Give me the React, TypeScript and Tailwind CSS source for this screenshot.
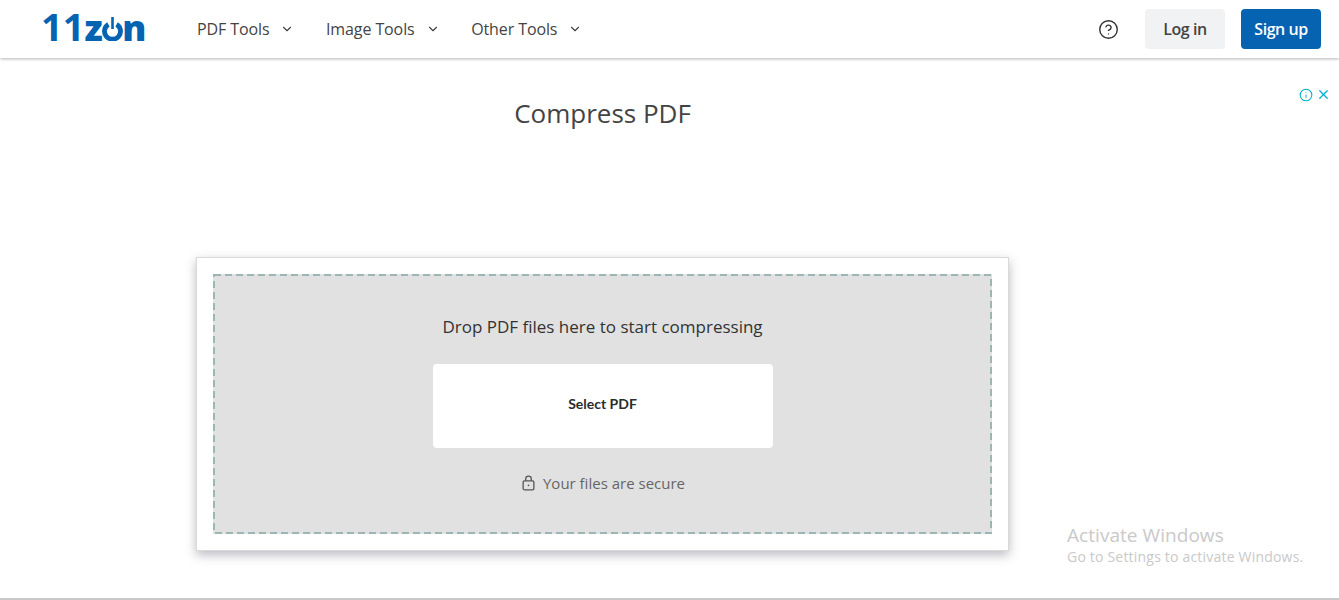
import React, { FC } from "react"
import { ChevronDown, CircleHelp, Info, X } from "lucide-react"

const NAV_ITEMS = ["PDF Tools", "Image Tools", "Other Tools"]

const Logo: FC = () => {
  return (
    <div className="mb-[4px] flex w-[104px] shrink-0 items-baseline text-[#0563b2] font-['Open_Sans',sans-serif] font-bold leading-[30px]">
      <span className="shrink-0 text-[38px]">11</span>
      <span className="shrink-0 text-[36px] font-extrabold tracking-[-0.5px]">z</span>
      <svg viewBox="0 0 21 24" className="h-[24px] w-[21px] shrink-0" fill="none">
        <path d="M6.4 7.4a8 8 0 1 0 8.2 0" stroke="#0563b2" strokeWidth="4.8" />
        <path d="M10.5 0v12" stroke="#0563b2" strokeWidth="2.6" />
      </svg>
      <span className="shrink-0 ml-[-1px] text-[36px] font-extrabold tracking-[-0.5px]">n</span>
    </div>
  )
}

const Header: FC = () => {
  return (
    <header className="relative flex h-[58px] items-center justify-between bg-white pl-[41px] pr-[18px] shadow-[0_1px_3px_rgba(0,0,0,0.3)]">
      <div className="flex items-center">
        <Logo />
        <nav className="ml-[52px] flex items-center gap-[31.5px]">
          {NAV_ITEMS.map((item) => (
            <button key={item} className="flex items-center gap-[11px] text-[16px] text-[#444] tracking-[-0.1px]">
              <span>{item}</span>
              <ChevronDown className="w-[14px] h-[14px] text-[#444]" strokeWidth={2} />
            </button>
          ))}
        </nav>
      </div>
      <div className="flex items-center">
        <CircleHelp className="w-[21px] h-[21px] text-[#333]" strokeWidth={1.6} />
        <button className="ml-[26px] h-[40px] w-[80px] rounded-[4px] bg-[#f1f2f3] text-[16px] font-semibold text-[#444] tracking-[-0.45px]">
          Log in
        </button>
        <button className="ml-[16px] h-[40px] w-[80px] rounded-[4px] bg-[#0563b2] text-[16px] font-semibold text-white tracking-[-0.45px]">
          Sign up
        </button>
      </div>
    </header>
  )
}

const UploadCard: FC = () => {
  return (
    <div className="h-[294px] w-[813px] border border-[#d9d9d9] bg-white p-[16px] shadow-[0_4px_10px_rgba(60,60,80,0.35)]">
      <div className="relative flex h-[260px] flex-col items-center bg-[#e1e1e1] pt-[41px]">
        <svg className="absolute inset-0 h-[260px] w-[779px]" fill="none">
          <rect x="1" y="1" width="777" height="258" stroke="#9db5b3" strokeWidth="2" strokeDasharray="7 4" />
        </svg>
        <p className="text-[17px] leading-[24px] text-[#333]">Drop PDF files here to start compressing</p>
        <button className="mt-[25px] h-[84px] w-[340px] rounded-[4px] bg-white pb-[6px] font-['Lato',sans-serif] text-[14px] font-bold text-[#2b2b2b]">
          Select PDF
        </button>
        <div className="ml-[2px] mt-[24px] flex items-center gap-[8px] text-[15px] leading-[22px] text-[#666]">
          <svg viewBox="0 0 14 17" className="h-[16px] w-[13px]" fill="none" stroke="#555" strokeWidth="1.4">
            <rect x="1.2" y="6.2" width="11.6" height="9.6" rx="1.5" />
            <path d="M4 6V4.2a3 3 0 0 1 6 0V6" />
            <circle cx="7" cy="11" r="0.9" fill="#555" stroke="none" />
          </svg>
          <span>Your files are secure</span>
        </div>
      </div>
    </div>
  )
}

const App: FC = () => {
  return (
    <div className="relative h-[600px] overflow-hidden border-b-2 border-[#c8c8c8] bg-white font-['Open_Sans',sans-serif]">
      <Header />
      <main className="ml-[196px] w-[813px]">
        <h1 className="mt-[37px] h-[162px] text-center text-[26px] leading-[36px] text-[#444]">Compress PDF</h1>
        <UploadCard />
      </main>
      <div className="absolute right-[8px] top-[87px] flex items-center gap-[3px]">
        <Info className="w-[14px] h-[14px] text-[#00aecd]" strokeWidth={1.8} />
        <X className="w-[15px] h-[15px] text-[#00aecd]" strokeWidth={2} />
      </div>
      <div className="absolute left-[1067px] top-[523px] font-['Open_Sans',sans-serif] text-[#c9c9c9]">
        <div className="text-[19px] leading-[24px] tracking-[0.05px]">Activate Windows</div>
        <div className="text-[14px] leading-[20px] tracking-[0.2px]">Go to Settings to activate Windows.</div>
      </div>
    </div>
  )
}

export default App
